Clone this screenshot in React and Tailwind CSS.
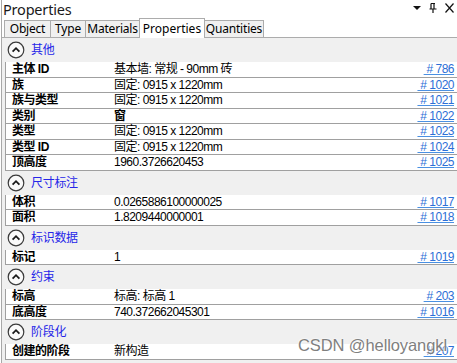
import React from 'react';

const sections = [
  {
    title: '其他',
    rows: [
      { name: '主体 ID', value: '基本墙: 常规 - 90mm 砖', id: '786' },
      { name: '族', value: '固定: 0915 x 1220mm', id: '1020' },
      { name: '族与类型', value: '固定: 0915 x 1220mm', id: '1021' },
      { name: '类别', value: '窗', id: '1022', bold: true },
      { name: '类型', value: '固定: 0915 x 1220mm', id: '1023' },
      { name: '类型 ID', value: '固定: 0915 x 1220mm', id: '1024' },
      { name: '顶高度', value: '1960.3726620453', id: '1025' },
    ],
  },
  {
    title: '尺寸标注',
    rows: [
      { name: '体积', value: '0.0265886100000025', id: '1017' },
      { name: '面积', value: '1.8209440000001', id: '1018' },
    ],
  },
  {
    title: '标识数据',
    rows: [{ name: '标记', value: '1', id: '1019' }],
  },
  {
    title: '约束',
    rows: [
      { name: '标高', value: '标高: 标高 1', id: '203' },
      { name: '底高度', value: '740.372662045301', id: '1016' },
    ],
  },
  {
    title: '阶段化',
    rows: [{ name: '创建的阶段', value: '新构造', id: '207' }],
  },
];

const tabs = [
  { label: 'Object', w: 'w-[47px]' },
  { label: 'Type', w: 'w-[36px]' },
  { label: 'Materials', w: 'w-[55px]' },
  { label: 'Properties', w: 'w-[66px]', active: true },
  { label: 'Quantities', w: 'w-[60px]' },
];

function CollapseIcon() {
  return (
    <svg width="18" height="18" viewBox="0 0 18 18" className="shrink-0">
      <circle cx="9" cy="9" r="7.8" fill="#fafafa" stroke="#3a3a3a" strokeWidth="1.2" />
      <path d="M5.6 10.6 L9 7.2 L12.4 10.6" fill="none" stroke="#1a1a1a" strokeWidth="1.8" />
    </svg>
  );
}

function SectionHeader({ title }) {
  return (
    <div className="h-[24px] flex items-center pl-[5px] gap-[6px]">
      <CollapseIcon />
      <span className="text-[12px] text-[#2626e8] tracking-[-0.3px]">{title}</span>
    </div>
  );
}

function Row({ row }) {
  return (
    <div className="h-[15.5px] ml-[3px] flex items-center bg-white border-l border-b border-[#a0a0a0] text-[12px] leading-none tracking-[-0.5px] text-black">
      <span className="w-[108px] pl-[6px] font-bold shrink-0">{row.name}</span>
      <span className={'flex-1 ' + (row.bold ? 'font-bold' : '')}>{row.value}</span>
      <span className="pr-[3px] text-[#2d6fd6] underline decoration-[#4a90e2] underline-offset-[1px] whitespace-pre">{' # ' + row.id}</span>
    </div>
  );
}

export default function App() {
  return (
    <div
      className="w-[457px] h-[363px] bg-white relative overflow-hidden pl-[1px]"
      style={{ fontFamily: '"Liberation Sans", "Noto Sans CJK SC", sans-serif' }}
    >
      <div className="h-full border-l border-[#a8a8a8] flex flex-col">
        {/* title bar */}
        <div className="h-[18px] flex items-center pl-[1px] relative">
          <span className="text-[14.5px] leading-none text-[#1a1a1a] tracking-[-0.2px]" style={{ fontFamily: '"Noto Sans", sans-serif' }}>Properties</span>
          <div className="absolute right-[3px] top-[3px] flex items-center gap-[8px]">
            <svg width="8" height="6" viewBox="0 0 8 6"><path d="M0 1 H8 L4 5 Z" fill="#111" /></svg>
            <svg width="8" height="10" viewBox="0 0 8 10">
              <path d="M2 0.5 H6 M2 0.5 V6 M5 0.5 V6 M0.5 6 H7.5 M4 6 V10" fill="none" stroke="#111" strokeWidth="1.2" />
            </svg>
            <svg width="9" height="10" viewBox="0 0 9 10">
              <path d="M0.5 0.5 L8.5 9.5 M8.5 0.5 L0.5 9.5" fill="none" stroke="#111" strokeWidth="1.2" />
            </svg>
          </div>
        </div>

        {/* tabs */}
        <div className="h-[19px] flex items-end pl-[2px] relative z-10">
          {tabs.map((t, i) =>
            t.active ? (
              <div
                key={t.label}
                className={`${t.w} h-[20px] -ml-px flex items-center justify-center bg-white border border-b-0 border-[#acacac] text-[12px] text-black -mb-px`}
                style={{ fontFamily: '"Noto Sans", sans-serif' }}
              >
                {t.label}
              </div>
            ) : (
              <div
                key={t.label}
                className={`${t.w} h-[17px] ${i === 0 ? '' : '-ml-px'} flex items-center justify-center bg-[#f0f0f0] border border-b-0 border-[#acacac] text-[12px] text-black tracking-[-0.2px]`}
                style={{ fontFamily: '"Noto Sans", sans-serif' }}
              >
                {t.label}
              </div>
            )
          )}
        </div>

        {/* property panel */}
        <div className="flex-1 bg-[#f0f0f0] border-t border-[#acacac]">
          {sections.map((s) => (
            <div key={s.title}>
              <SectionHeader title={s.title} />
              {s.rows.map((r) => (
                <Row key={r.name} row={r} />
              ))}
            </div>
          ))}
        </div>
      </div>

      {/* watermark */}
      <div
        className="absolute left-[298px] top-[333px] text-[16.5px] text-[#7f7f7f] tracking-[-0.1px]"
        style={{ textShadow: '0 0 2px #fff, 0 0 2px #fff' }}
      >
        CSDN @helloyangkl
      </div>
    </div>
  );
}
